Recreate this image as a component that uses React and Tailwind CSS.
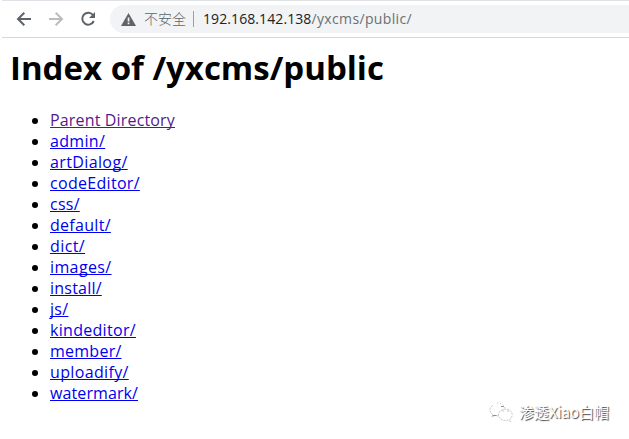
const entries = [
  { name: "Parent Directory", tone: "text-[#551a8b]", tracking: "tracking-[0.16px]" },
  { name: "admin/", tone: "text-[#0000ee]", tracking: "tracking-[0.33px]" },
  { name: "artDialog/", tone: "text-[#0000ee]", tracking: "tracking-[0.38px]" },
  { name: "codeEditor/", tone: "text-[#0000ee]", tracking: "tracking-[0.3px]" },
  { name: "css/", tone: "text-[#0000ee]", tracking: "tracking-[0.25px]" },
  { name: "default/", tone: "text-[#0000ee]", tracking: "tracking-[0.3px]" },
  { name: "dict/", tone: "text-[#0000ee]", tracking: "tracking-[0.4px]" },
  { name: "images/", tone: "text-[#0000ee]", tracking: "tracking-[0.38px]" },
  { name: "install/", tone: "text-[#0000ee]", tracking: "tracking-[0.22px]" },
  { name: "js/", tone: "text-[#0000ee]", tracking: "tracking-[0.3px]" },
  { name: "kindeditor/", tone: "text-[#0000ee]", tracking: "tracking-[0.3px]" },
  { name: "member/", tone: "text-[#0000ee]", tracking: "tracking-[0.25px]" },
  { name: "uploadify/", tone: "text-[#0000ee]", tracking: "tracking-[0.35px]" },
  { name: "watermark/", tone: "text-[#0000ee]", tracking: "tracking-[0.1px]" },
];

function Toolbar() {
  return (
    <header className="ml-0.5 flex h-[38px] items-center border-t border-b border-t-[#dee1e6] border-b-[#d5d7da] bg-white pl-3.5">
      <svg className="size-4 shrink-0" viewBox="0 0 16 16" fill="none" stroke="#5f6368" strokeWidth="2">
        <path d="M15 8H2.500M8.300 1.700 2 8l6.300 6.300" />
      </svg>
      <svg className="ml-4 size-4 shrink-0" viewBox="0 0 16 16" fill="none" stroke="#babcbe" strokeWidth="2">
        <path d="M1 8h12.500M7.700 1.700 14 8l-6.300 6.300" />
      </svg>
      <svg className="ml-4 size-4 shrink-0" viewBox="0 0 16 16" fill="none" stroke="#5f6368" strokeWidth="2">
        <path d="M13.200 4.200A6 6 0 1 0 13.800 10" />
        <path d="M15 1v6H9z" fill="#5f6368" stroke="none" />
      </svg>
      <div className="ml-3.5 flex h-7 flex-1 items-center rounded-l-full bg-[#f1f3f4] pl-[11px] whitespace-nowrap">
        <svg className="size-[15px] shrink-0" viewBox="0 0 15 15">
          <path d="M7.500 1 15 14H0z" fill="#5f6368" />
          <path d="M6.700 5.500h1.700v4H6.700zM6.700 10.600h1.700v1.700H6.700z" fill="#f1f3f4" />
        </svg>
        <span className="ml-2 w-[43px] pb-0.5 font-['Noto_Sans_CJK_SC',sans-serif] text-sm font-light text-[#5f6368]">不安全</span>
        <span className="ml-1.5 h-4 w-px bg-[#9aa0a6]" />
        <span className="ml-[9px] font-['Open_Sans',sans-serif] text-sm tracking-[0.09px] text-[#202124]">192.168.142.138<span className="tracking-[0.36px] text-[#6b6f73]">/yxcms/public/</span></span>
      </div>
    </header>
  );
}

function Watermark() {
  return (
    <div className="absolute top-[401px] left-[489px] flex items-center whitespace-nowrap">
      <svg className="h-[22px] w-6 shrink-0" viewBox="0 0 24 22" fill="#fff" stroke="#b5b5b5" strokeWidth=".8">
        <path d="M3.700 4.500C2 5.500 1 7 1 8.700c0 2 1 3.700 2.700 5L3 16l3-1.500c1 .3 2 .4 3 .4" strokeDasharray="2 1" />
        <path d="M8 2c4 0 7 2 8 5" strokeDasharray="1 2" />
        <path d="M16.500 8C12.500 8 9.500 10.500 9.500 13.800s3 5.700 7 5.700c.9 0 1.700-.1 2.500-.4l2.500 1.400-.7-2.200c1.500-1.100 2.400-2.700 2.400-4.500C23.200 10.500 20.300 8 16.500 8Z" strokeDasharray="2 1" />
        <path d="M3.500 14.500h4M12 5.500h3M14 9.500v1M19 9.500v1" stroke="#777" />
      </svg>
      <span className="ml-1.5 font-['Noto_Sans_CJK_SC',sans-serif] text-[15px] leading-[22px] tracking-[-0.05px] text-white [text-shadow:1px_1px_1px_#444]">渗透Xiao白帽</span>
    </div>
  );
}

export default function App() {
  return (
    <div className="relative h-[439px] w-[629px] overflow-hidden bg-white">
      <Toolbar />
      <main className="pl-2.5 font-['Open_Sans',sans-serif] text-black">
        <h1 className="mt-2 h-[43px] text-[33px] leading-[43px] font-bold whitespace-nowrap">Index of /yxcms/public</h1>
        <ul className="mt-[21px] list-none">
          {entries.map((entry) => (
            <li key={entry.name} className="flex h-[21px] items-center whitespace-nowrap">
              <span className="ml-[22px] size-1.5 shrink-0 rounded-full bg-black" />
              <a className={`ml-3 text-base leading-[21px] underline decoration-1 underline-offset-1 [text-decoration-skip-ink:none] ${entry.tone} ${entry.tracking}`}>{entry.name}</a>
            </li>
          ))}
        </ul>
      </main>
      <Watermark />
    </div>
  );
}
